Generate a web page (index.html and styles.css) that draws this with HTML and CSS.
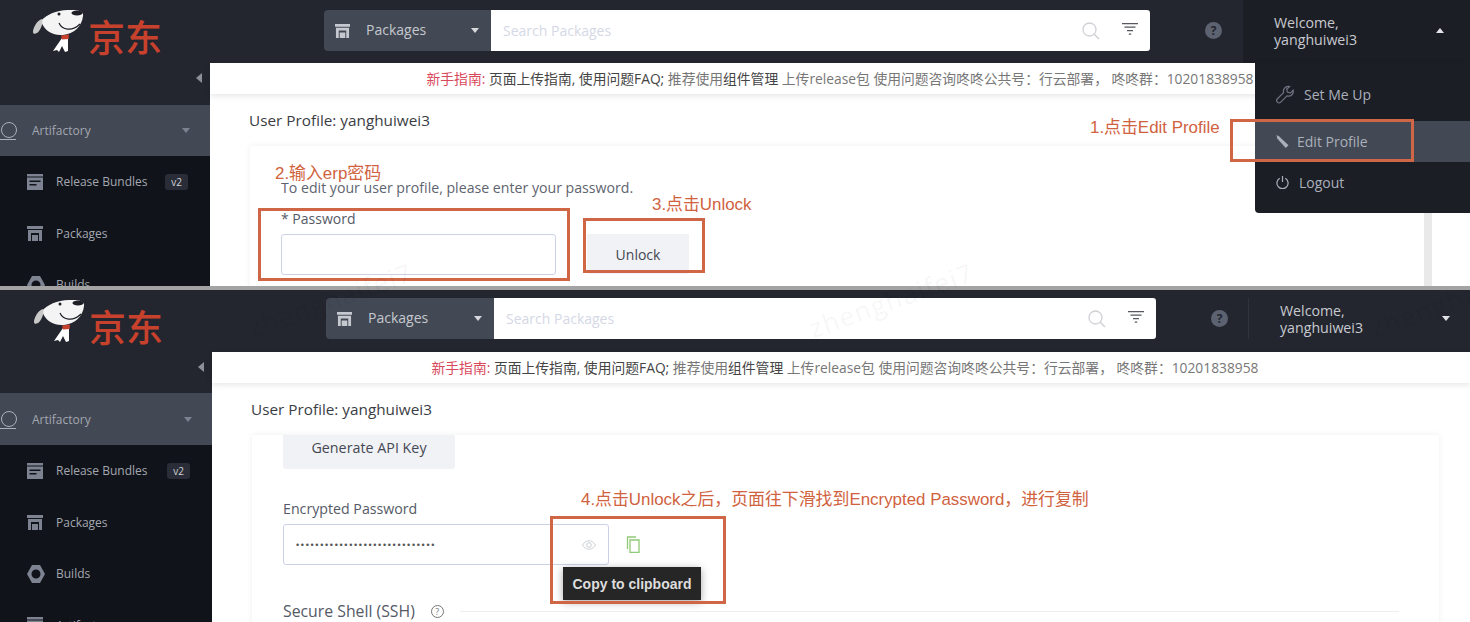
FILE: index.html
```html
<!DOCTYPE html>
<html lang="en">
<head>
    <meta charset="UTF-8">
    <meta name="viewport" content="width=device-width, initial-scale=1.0">
    <title>User Profile</title>
    <link rel="stylesheet" href="styles.css">
</head>
<body>
    <svg class="icon-defs" width="0" height="0">
        <symbol id="dog" viewBox="0 0 52 42">
            <path fill="#f4f4f4" d="M9 11C14 5 24 0 36 0C46-.5 52 1 51 6C50 16 42 24 31 25C20 26 12 20 9 11Z"/>
            <path fill="#c9c9c9" d="M10 9C5 10 1 18 1 22C1 25 5 24 7 21C10 17 11 12 10 9Z"/>
            <ellipse cx="45" cy="3" rx="5.500" ry="2.500" fill="#1c1e25"/>
            <circle cx="27" cy="4" r="1.500" fill="#1c1e25"/>
            <path fill="none" stroke="#1c1e25" stroke-width="1.200" d="M27 13C30 20 40 22 48 14"/>
            <path fill="#fff" d="M30 28L21 41L25 40L27 42L30 36L33 42L36 41L36 27Z"/>
            <path fill="#c8412d" d="M29 25.500L37 24.500L36.500 29L30 29.500Z"/>
        </symbol>
        <symbol id="pkg" viewBox="0 0 16 16">
            <path fill="currentColor" d="M0 1h16v3H0zM1 5h14v11h-3V8H4v8H1zM5 10h6v6H5z"/>
        </symbol>
        <symbol id="bundle" viewBox="0 0 16 16">
            <path fill="currentColor" d="M0 0h16v2.500H0zM0 3.500h16V16H0zM2.500 6.500v1.500h11V6.500zM2.500 10v1.500h7V10z" fill-rule="evenodd"/>
        </symbol>
        <symbol id="hex" viewBox="0 0 18 18">
            <path fill="currentColor" fill-rule="evenodd" d="M5 0h8l5 9-5 9H5L0 9zM9 4.500a4.500 4.500 0 1 0 0 9 4.500 4.500 0 0 0 0-9z"/>
        </symbol>
        <symbol id="search" viewBox="0 0 18 18">
            <circle cx="7.500" cy="7.500" r="6.500" fill="none" stroke="#cfd1d6" stroke-width="1.300"/>
            <path stroke="#cfd1d6" stroke-width="1.500" d="M12 12l5 5"/>
        </symbol>
        <symbol id="filter" viewBox="0 0 16 12">
            <path fill="#55585f" d="M0 0h16v1.300H0zM2.500 3.500h11v1.300h-11zM5 7h6v1.300H5zM6.800 10.400h2.400v1.300H6.800z"/>
        </symbol>
    </svg>

    <section class="shot shot-top">
        <header class="topbar">
            <div class="brand">
                <svg class="brand-dog"><use href="#dog"/></svg>
                <span class="brand-name">京东</span>
            </div>
            <div class="pkg-select">
                <svg class="pkg-icon"><use href="#pkg"/></svg>
                <span class="pkg-label">Packages</span>
                <span class="caret"></span>
            </div>
            <div class="search">
                <span class="search-text">Search Packages</span>
                <svg class="search-icon"><use href="#search"/></svg>
                <svg class="filter-icon"><use href="#filter"/></svg>
            </div>
            <div class="help-wrap"><span class="help">?</span></div>
            <div class="user user-open">
                <span class="user-name">Welcome,<br>yanghuiwei3</span>
                <span class="caret caret-up"></span>
            </div>
        </header>
        <div class="body">
            <nav class="sidebar">
                <div class="side-top"><span class="collapse"></span></div>
                <div class="side-head">
                    <span class="side-logo"></span>
                    <span class="side-head-text">Artifactory</span>
                    <span class="caret caret-dim"></span>
                </div>
                <div class="side-item"><svg class="side-icon"><use href="#bundle"/></svg><span>Release Bundles</span><span class="badge">v2</span></div>
                <div class="side-item"><svg class="side-icon"><use href="#pkg"/></svg><span>Packages</span></div>
                <div class="side-item"><svg class="side-icon side-hex"><use href="#hex"/></svg><span>Builds</span></div>
            </nav>
            <main class="main">
                <div class="notice">
                    <span class="n-red">新手指南:</span> <span class="n-dark">页面上传指南, 使用问题FAQ;</span> 推荐使用<span class="n-dark">组件管理</span> 上传release包 使用问题咨询咚咚公共号：行云部署， 咚咚群：10201838958
                </div>
                <h1 class="page-title">User Profile: yanghuiwei3</h1>
                <div class="card-row">
                    <div class="card card-unlock">
                        <p class="hint">To edit your user profile, please enter your password.</p>
                        <label class="field-label">* Password</label>
                        <div class="unlock-row">
                            <div class="input"></div>
                            <div class="btn btn-unlock">Unlock</div>
                        </div>
                    </div>
                    <div class="track"></div>
                </div>
            </main>
        </div>
        <div class="menu">
            <div class="menu-item">
                <svg class="menu-icon" viewBox="0 0 20 20"><path fill="none" stroke="#6d7380" stroke-width="1.300" d="M13 1.500a5 5 0 0 0-5 6.500L1.500 14.500a2.200 2.200 0 0 0 3.500 3.500L11.500 11.500a5 5 0 0 0 6.500-6l-3 3-3-1-.8-3 3-2.800z"/></svg>
                <span>Set Me Up</span>
            </div>
            <div class="menu-item menu-item-active">
                <svg class="menu-icon menu-icon-sm" viewBox="0 0 14 14"><path fill="#aab0bb" d="M.5 0L3.500 1.500l10 9.500-3 3-9-10z"/></svg>
                <span>Edit Profile</span>
            </div>
            <div class="menu-item">
                <svg class="menu-icon menu-icon-sm" viewBox="0 0 14 14"><path fill="none" stroke="#aab0bb" stroke-width="1.300" d="M4 2.500a6 6 0 1 0 6 0M7 0v6.500"/></svg>
                <span>Logout</span>
            </div>
        </div>
        <div class="note-box box-1"></div>
        <div class="note-box box-2"></div>
        <div class="note-box box-3"></div>
        <span class="note note-1">1.点击Edit Profile</span>
        <span class="note note-2">2.输入erp密码</span>
        <span class="note note-3">3.点击Unlock</span>
    </section>

    <div class="split"></div>

    <section class="shot shot-bottom">
        <header class="topbar">
            <div class="brand">
                <svg class="brand-dog"><use href="#dog"/></svg>
                <span class="brand-name">京东</span>
            </div>
            <div class="pkg-select">
                <svg class="pkg-icon"><use href="#pkg"/></svg>
                <span class="pkg-label">Packages</span>
                <span class="caret"></span>
            </div>
            <div class="search">
                <span class="search-text">Search Packages</span>
                <svg class="search-icon"><use href="#search"/></svg>
                <svg class="filter-icon"><use href="#filter"/></svg>
            </div>
            <div class="help-wrap"><span class="help">?</span></div>
            <div class="user">
                <span class="user-name">Welcome,<br>yanghuiwei3</span>
                <span class="caret caret-light"></span>
            </div>
        </header>
        <div class="body">
            <nav class="sidebar">
                <div class="side-top"><span class="collapse"></span></div>
                <div class="side-head">
                    <span class="side-logo"></span>
                    <span class="side-head-text">Artifactory</span>
                    <span class="caret caret-dim"></span>
                </div>
                <div class="side-item"><svg class="side-icon"><use href="#bundle"/></svg><span>Release Bundles</span><span class="badge">v2</span></div>
                <div class="side-item"><svg class="side-icon"><use href="#pkg"/></svg><span>Packages</span></div>
                <div class="side-item"><svg class="side-icon side-hex"><use href="#hex"/></svg><span>Builds</span></div>
                <div class="side-item"><svg class="side-icon"><use href="#bundle"/></svg><span>Artifacts</span></div>
            </nav>
            <main class="main">
                <div class="notice">
                    <span class="n-red">新手指南:</span> <span class="n-dark">页面上传指南, 使用问题FAQ;</span> 推荐使用<span class="n-dark">组件管理</span> 上传release包 使用问题咨询咚咚公共号：行云部署， 咚咚群：10201838958
                </div>
                <h1 class="page-title">User Profile: yanghuiwei3</h1>
                <div class="card-row">
                    <div class="card card-keys">
                        <div class="btn btn-generate">Generate API Key</div>
                        <label class="field-label field-enc">Encrypted Password</label>
                        <div class="enc-row">
                            <div class="input input-enc">
                                <span class="dots">•••••••••••••••••••••••••••••</span>
                                <svg class="eye" viewBox="0 0 14 10"><path fill="none" stroke="#c9ccd2" d="M.5 5C3 1.500 5 .8 7 .8S11 1.500 13.500 5C11 8.500 9 9.200 7 9.200S3 8.500 .5 5z"/><circle cx="7" cy="5" r="2.300" fill="none" stroke="#c9ccd2"/></svg>
                            </div>
                            <svg class="copy" viewBox="0 0 14 17"><path fill="none" stroke="#8fca76" stroke-width="1.300" d="M10 1H1.500v12M4 4h9v12.300H4z"/></svg>
                        </div>
                        <div class="ssh-row">
                            <span class="ssh-title">Secure Shell (SSH)</span>
                            <span class="ssh-help">?</span>
                            <span class="ssh-line"></span>
                        </div>
                    </div>
                </div>
            </main>
        </div>
        <div class="tooltip">Copy to clipboard</div>
        <div class="note-box box-4"></div>
        <span class="note note-4">4.点击Unlock之后，页面往下滑找到Encrypted Password，进行复制</span>
    </section>

    <span class="mark mark-1">zhenghaifei7</span>
    <span class="mark mark-2">zhenghaifei7</span>
    <span class="mark mark-3">zhenghaifei7</span>
</body>
</html>
```

FILE: styles.css
```css
* {
    box-sizing: border-box;
}
html, body {
    margin: 0;
    height: 622px;
    overflow: hidden;
}
body {
    position: relative;
    background: #fff;
    font-family: 'Open Sans', 'Noto Sans CJK SC', sans-serif;
    color: #333;
}
.icon-defs {
    position: absolute;
}
.shot {
    position: relative;
    overflow: hidden;
    display: flex;
    flex-direction: column;
}
.shot-top {
    height: 286px;
}
.shot-bottom {
    height: 332px;
}
.split {
    height: 4px;
    background: #a3a3a3;
}

/* top bar */
.topbar {
    display: flex;
    align-items: flex-start;
    height: 63px;
    flex: none;
    padding-top: 10px;
    background: #23262f;
}
.shot-bottom .topbar {
    height: 62px;
    padding-top: 8px;
}
.brand {
    display: flex;
    align-items: flex-start;
    width: 324px;
    padding-left: 32px;
    flex: none;
}
.shot-bottom .brand {
    width: 326px;
    padding-left: 33px;
    margin-top: 2px;
}
.brand-dog {
    width: 52px;
    height: 42px;
}
.brand-name {
    margin-left: 4px;
    font-family: 'Noto Sans CJK SC', sans-serif;
    font-size: 37px;
    font-weight: 500;
    line-height: 52px;
    color: #c8412d;
}
.pkg-select {
    display: flex;
    align-items: center;
    width: 167px;
    height: 41px;
    padding: 0 12px 0 11px;
    flex: none;
    background: #424854;
    border-radius: 4px 0 0 4px;
    color: #c5c8ce;
    font-size: 14px;
}
.shot-bottom .pkg-select {
    width: 168px;
}
.pkg-icon {
    width: 15px;
    height: 15px;
    color: #c5c8ce;
}
.pkg-label {
    flex: 1;
    margin-left: 16px;
    padding-bottom: 2px;
}
.caret {
    width: 0;
    height: 0;
    border-left: 4.500px solid transparent;
    border-right: 4.500px solid transparent;
    border-top: 5px solid #d6d8dc;
}
.caret-up {
    border-top: 0;
    border-bottom: 5px solid #e4e5e8;
}
.caret-light {
    border-top-color: #e4e5e8;
}
.caret-dim {
    border-top-color: #7c8290;
}
.search {
    display: flex;
    align-items: center;
    width: 659px;
    height: 41px;
    padding: 0 12px;
    flex: none;
    background: #fff;
    border-radius: 0 3px 3px 0;
    font-size: 14px;
}
.shot-bottom .search {
    width: 662px;
}
.search-text {
    flex: 1;
    color: #d5d8e6;
}
.search-icon {
    width: 18px;
    height: 18px;
    margin-right: 22px;
}
.filter-icon {
    width: 16px;
    height: 12px;
    margin: 0 0 4px;
}
.help-wrap {
    width: 93px;
    height: 41px;
    padding-left: 55px;
    flex: none;
    display: flex;
    align-items: center;
}
.shot-bottom .help-wrap {
    width: 93px;
    border-right: 1px solid #30333c;
}
.help {
    width: 17px;
    height: 17px;
    border-radius: 50%;
    background: #5c6270;
    color: #23262f;
    font-size: 12px;
    font-weight: 700;
    line-height: 17px;
    text-align: center;
}
.user {
    display: flex;
    align-items: center;
    flex: 1;
    height: 41px;
    padding: 0 20px 0 31px;
    color: #c8cad0;
    font-size: 14.200px;
    line-height: 17px;
}
.user-open {
    height: 63px;
    margin-top: -10px;
    padding: 14px 26px 0 31px;
    background: #1c1e25;
    align-items: flex-start;
}
.user-name {
    flex: 1;
}
.user-open .caret {
    margin-top: 14px;
}

/* sidebar + page */
.body {
    display: flex;
    flex: 1;
    min-height: 0;
}
.sidebar {
    width: 210px;
    flex: none;
    background: #11131a;
    color: #a3a7b0;
    font-size: 12px;
}
.shot-bottom .sidebar {
    width: 212px;
}
.side-top {
    display: flex;
    align-items: center;
    justify-content: flex-end;
    height: 42px;
    padding: 0 8px 12px 0;
    background: #23262f;
}
.shot-bottom .side-top {
    height: 41px;
}
.collapse {
    width: 0;
    height: 0;
    border-top: 5.500px solid transparent;
    border-bottom: 5.500px solid transparent;
    border-right: 6px solid #8b909b;
}
.side-head {
    display: flex;
    align-items: center;
    height: 51px;
    padding: 0 20px 0 0;
    background: #424854;
}
.shot-bottom .side-head {
    height: 52px;
    padding-top: 1px;
}
.side-logo {
    width: 16px;
    height: 18px;
    margin-right: 16px;
    border-bottom: 1.500px solid #aeb2ba;
}
.side-logo::before {
    content: "";
    display: block;
    width: 14px;
    height: 14px;
    margin-left: 1px;
    border: 1.300px solid #aeb2ba;
    border-radius: 50%;
}
.side-head-text {
    flex: 1;
}
.side-item {
    display: flex;
    align-items: center;
    height: 51.500px;
    padding: 0 22px 0 27px;
}
.side-icon {
    width: 16px;
    height: 16px;
    margin-right: 13px;
    color: #7d8390;
    flex: none;
}
.side-hex {
    width: 18px;
    height: 18px;
    margin-right: 11px;
}
.badge {
    margin-left: auto;
    padding: 0 6px;
    border-radius: 3px;
    background: #2a2d38;
    color: #d0d2d7;
    font-size: 10px;
    line-height: 16px;
}
.main {
    flex: 1;
    min-width: 0;
    background: #fff;
}
.notice {
    height: 31px;
    background: #fff;
    box-shadow: 0 2px 6px rgba(0,0,0,0.1);
    color: #777;
    font-size: 13.800px;
    line-height: 31px;
    text-align: center;
    white-space: nowrap;
}
.shot-bottom .notice {
    padding-left: 8px;
}
.n-red {
    color: #d9485a;
}
.n-dark {
    color: #444;
}
.page-title {
    margin: 0;
    padding: 15px 0 0 39px;
    height: 52px;
    color: #3a3d44;
    font-size: 15.300px;
    font-weight: 400;
    line-height: 22px;
}
.card-row {
    display: flex;
    height: 200px;
}
.shot-bottom .card-row {
    padding-right: 31px;
}
.card {
    margin-left: 40px;
    flex: 1;
    background: #fff;
    box-shadow: 0 0 6px rgba(0,0,0,0.07);
}
.track {
    width: 8px;
    margin-right: 38px;
    background: #e9e9e9;
}
.card-unlock {
    padding: 33px 0 0 31px;
}
.card-keys {
    padding: 0 0 0 31px;
}
.hint {
    margin: 0 0 13px;
    color: #5e6470;
    font-size: 14.150px;
    line-height: 18px;
}
.field-label {
    display: block;
    color: #555a66;
    font-size: 14px;
    line-height: 18px;
}
.unlock-row {
    display: flex;
    gap: 31px;
    margin-top: 6px;
}
.input {
    width: 275px;
    height: 41px;
    border: 1px solid #ccd2e6;
    border-radius: 3px;
    background: #fff;
}
.btn {
    display: flex;
    align-items: center;
    justify-content: center;
    background: #f1f2f6;
    color: #444852;
    font-size: 14.300px;
    font-weight: 500;
    border-radius: 0 0 3px 3px;
}
.btn-unlock {
    width: 102px;
    height: 40px;
    font-size: 14px;
    font-weight: 400;
}
.btn-generate {
    width: 172px;
    height: 34px;
    margin-bottom: 31px;
    padding-bottom: 10px;
}
.field-enc {
    margin-bottom: 6px;
    font-size: 14.200px;
}
.enc-row {
    display: flex;
    align-items: center;
    gap: 17px;
}
.input-enc {
    display: flex;
    align-items: center;
    justify-content: space-between;
    width: 326px;
    padding: 0 12px;
}
.dots {
    color: #555;
    font-family: 'Liberation Sans', sans-serif;
    font-size: 9px;
    letter-spacing: 1.680px;
}
.eye {
    width: 14px;
    height: 10px;
}
.copy {
    width: 14px;
    height: 17px;
}
.ssh-row {
    display: flex;
    align-items: center;
    margin-top: 34px;
}
.ssh-title {
    color: #555a66;
    font-size: 15.800px;
    line-height: 24px;
}
.ssh-help {
    width: 13px;
    height: 13px;
    margin-left: 16px;
    border: 1px solid #777;
    border-radius: 50%;
    color: #777;
    font-size: 9px;
    line-height: 11px;
    text-align: center;
}
.ssh-line {
    flex: 1;
    height: 1px;
    margin: 0 40px 0 16px;
    background: #eceef2;
}

/* dropdown and tooltip */
.menu {
    position: absolute;
    top: 63px;
    left: 1255px;
    width: 215px;
    height: 150px;
    padding-top: 10px;
    background: #1c1e25;
    border-radius: 0 0 0 4px;
    color: #aab0bb;
    font-size: 14px;
}
.menu-item {
    display: flex;
    align-items: center;
    gap: 10px;
    height: 40px;
    padding-left: 20px;
}
.menu-item:first-child {
    gap: 9px;
    height: 48px;
    padding-bottom: 6px;
}
.menu-item:last-child {
    height: 40px;
}
.menu-item-active {
    gap: 8px;
    height: 41px;
    background: #424854;
}
.menu-icon {
    width: 19px;
    height: 19px;
    margin-left: 1px;
}
.menu-icon-sm {
    width: 13px;
    height: 13px;
}
.tooltip {
    position: absolute;
    top: 277px;
    left: 563px;
    width: 138px;
    height: 33px;
    background: #262626;
    box-shadow: 0 2px 8px rgba(0,0,0,0.35);
    color: #ddd;
    font-family: 'Liberation Sans', sans-serif;
    font-size: 14px;
    font-weight: 700;
    line-height: 34px;
    text-align: center;
}

/* watermark */
.mark {
    position: absolute;
    top: 282px;
    color: rgba(0,0,0,0.05);
    font-size: 26px;
    letter-spacing: 1.500px;
    line-height: 36px;
    white-space: nowrap;
    transform: rotate(-19.500deg);
}
.mark-1 {
    left: 244px;
}
.mark-2 {
    left: 805px;
}
.mark-3 {
    left: 1366px;
}

/* red annotations over the screenshots */
.note-box {
    position: absolute;
    border: 3px solid #cf6645;
}
.box-1 {
    left: 1230px;
    top: 119px;
    width: 184px;
    height: 43px;
}
.box-2 {
    left: 258px;
    top: 208px;
    width: 312px;
    height: 73px;
}
.box-3 {
    left: 583px;
    top: 218px;
    width: 122px;
    height: 55px;
}
.box-4 {
    left: 550px;
    top: 226px;
    width: 176px;
    height: 88px;
}
.note {
    position: absolute;
    color: #d0623e;
    font-family: 'Liberation Sans', 'Noto Sans CJK SC', sans-serif;
    font-size: 16.900px;
    line-height: 20px;
    white-space: nowrap;
}
.note-1 {
    left: 1090px;
    top: 118px;
}
.note-2 {
    left: 275px;
    top: 164px;
}
.note-3 {
    left: 652px;
    top: 195px;
}
.note-4 {
    left: 581px;
    top: 200px;
}
```
